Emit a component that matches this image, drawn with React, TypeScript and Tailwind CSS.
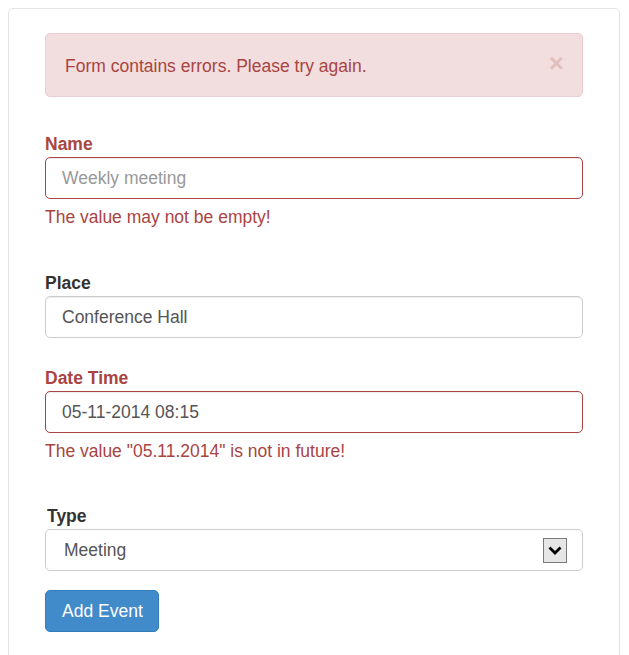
import { useState } from 'react';

const inputBase =
  "block h-[42px] w-full rounded-[5px] border bg-white pl-[16px] pr-[15px] text-[#555] outline-none placeholder:text-[#999] shadow-[inset_0_1px_1px_rgba(0,0,0,0.075)]";

function ErrorText({ children }: { children: React.ReactNode }) {
  return <p className="mt-[6px] text-[#a94442]">{children}</p>;
}

export default function App() {
  const [name, setName] = useState('');
  const [place, setPlace] = useState('Conference Hall');
  const [when, setWhen] = useState('05-11-2014 08:15');
  const [type, setType] = useState('Meeting');
  const [showAlert, setShowAlert] = useState(true);

  return (
    <div className="min-h-screen bg-white p-2 font-['Liberation_Sans',Arial,sans-serif] text-[17.5px] leading-[25px] text-[#333]">
      <div className="w-[612px] rounded-[5px] border border-[#e3e3e3] px-[36px] pt-[24px] pb-[60px]">
        {showAlert && (
          <div className="flex items-start justify-between rounded-[5px] border border-[#ebccd1] bg-[#f2dede] pl-[19px] pr-[18px] pt-[19px] pb-[17px] leading-[26px] text-[#a94442]">
            <span>Form contains errors. Please try again.</span>
            <button
              type="button"
              onClick={() => setShowAlert(false)}
              className="text-[26px] font-bold leading-[20px] text-[#a94442] opacity-20"
            >
              ×
            </button>
          </div>
        )}

        <form className="mt-[35px]" onSubmit={(e) => e.preventDefault()}>
          <label className="block font-bold text-[#a94442]">Name</label>
          <input
            type="text"
            value={name}
            onChange={(e) => setName(e.target.value)}
            placeholder="Weekly meeting"
            className={`${inputBase} border-[#a94442]`}
          />
          <ErrorText>The value may not be empty!</ErrorText>

          <label className="mt-[41px] block font-bold">Place</label>
          <input
            type="text"
            value={place}
            onChange={(e) => setPlace(e.target.value)}
            className={`${inputBase} border-[#ccc]`}
          />

          <label className="mt-[28px] block font-bold text-[#a94442]">Date Time</label>
          <input
            type="text"
            value={when}
            onChange={(e) => setWhen(e.target.value)}
            className={`${inputBase} border-[#a94442]`}
          />
          <ErrorText>The value "05.11.2014" is not in future!</ErrorText>

          <label className="mt-[40px] block pl-[2px] font-bold">Type</label>
          <div className="relative">
            <select
              value={type}
              onChange={(e) => setType(e.target.value)}
              className="block h-[42px] w-full appearance-none rounded-[5px] border border-[#ccc] bg-white pl-[18px] text-[#555] outline-none"
            >
              <option>Meeting</option>
              <option>Workshop</option>
              <option>Conference</option>
            </select>
            <div className="pointer-events-none absolute right-[16px] top-[9px] flex h-[25px] w-[24px] items-center justify-center border border-[#7a7a7a] bg-[#e6e6e6]">
              <svg width="16" height="11" viewBox="0 0 16 11">
                <polyline points="2.5,2.5 8,8 13.5,2.5" fill="none" stroke="#000" strokeWidth="2.8" />
              </svg>
            </div>
          </div>

          <button
            type="submit"
            className="mt-[19px] h-[42px] rounded-[5px] border border-[#357ebd] bg-[#428bca] pl-[16px] pr-[15px] text-white"
          >
            Add Event
          </button>
        </form>
      </div>
    </div>
  );
}
